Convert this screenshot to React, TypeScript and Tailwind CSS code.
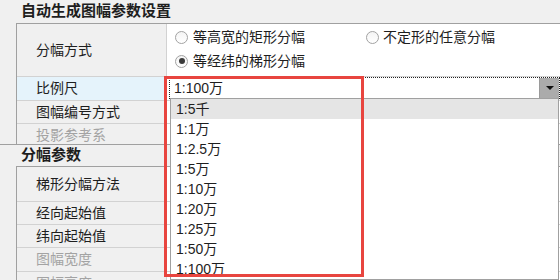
const scales = ['1:5千', '1:1万', '1:2.5万', '1:5万', '1:10万', '1:20万', '1:25万', '1:50万', '1:100万']

function Radio({ checked }: { checked?: boolean }) {
  return (
    <span className="w-[13px] h-[13px] rounded-full border border-[#a2a2a2] bg-gradient-to-b from-[#f4f4f4] to-white flex items-center justify-center shrink-0">
      {checked && <span className="w-[6px] h-[6px] rounded-full bg-[#3a3a3a]" />}
    </span>
  )
}

function Row({
  label,
  h,
  muted,
  active,
  children,
}: {
  label: string
  h: string
  muted?: boolean
  active?: boolean
  children?: React.ReactNode
}) {
  return (
    <div className={`flex border-b border-[#d2d2d2] shrink-0 ${h}`}>
      <div
        className={`w-[150px] shrink-0 pl-[19px] flex items-center border-r border-[#d2d2d2] ${
          active ? 'bg-[#e5f3fb]' : ''
        } ${muted ? 'text-[#a3a3a3]' : ''}`}
      >
        {label}
      </div>
      <div className="flex-1 bg-white">{children}</div>
    </div>
  )
}

export default function App() {
  return (
    <div className="relative w-[560px] h-[280px] overflow-hidden bg-[#f0f0f0] text-[14px] text-[#1e1e1e] font-['Liberation_Sans','Noto_Sans_CJK_SC',sans-serif] flex flex-col">
      <div className="h-[23px] shrink-0 pl-[21px] flex items-center font-bold text-[15px]">自动生成图幅参数设置</div>

      <div className="ml-[16px] h-[121px] shrink-0 border-l border-t border-[#a0a0a0] flex flex-col overflow-hidden">
        <Row label="分幅方式" h="h-[53px]">
          <div className="flex flex-col pt-[1px] pl-[8px]">
            <div className="h-[24px] flex items-center">
              <div className="w-[191px] flex items-center gap-[5px]">
                <Radio />
                <span>等高宽的矩形分幅</span>
              </div>
              <div className="flex items-center gap-[4px]">
                <Radio />
                <span>不定形的任意分幅</span>
              </div>
            </div>
            <div className="h-[24px] flex items-center gap-[5px]">
              <Radio checked />
              <span>等经纬的梯形分幅</span>
            </div>
          </div>
        </Row>
        <Row label="比例尺" h="h-[24px]" active>
          <div className="h-full pl-[2px] pb-[1px]">
            <div className="h-full flex border border-dotted border-[#222] bg-white">
              <div className="flex-1 pl-[4px] flex items-center">1:100万</div>
              <div className="w-[20px] bg-[#ababab] border-l border-[#9a9a9a] flex items-center justify-center">
                <svg width="8" height="4" viewBox="0 0 8 4">
                  <path d="M0 0h8L4 4z" fill="#111" />
                </svg>
              </div>
            </div>
          </div>
        </Row>
        <Row label="图幅编号方式" h="h-[23px]" />
        <Row label="投影参考系" h="h-[23px]" muted />
      </div>

      <div className="h-[22px] shrink-0 border-t border-[#a0a0a0] pl-[21px] flex items-center font-bold text-[15px]">分幅参数</div>

      <div className="ml-[16px] flex-1 border-l border-t border-[#a0a0a0] flex flex-col overflow-hidden">
        <Row label="梯形分幅方法" h="h-[35px]" />
        <Row label="经向起始值" h="h-[23px]" />
        <Row label="纬向起始值" h="h-[23px]" />
        <Row label="图幅宽度" h="h-[24px]" muted />
        <Row label="图幅高度" h="h-[23px]" muted />
      </div>

      <div className="absolute left-[170px] top-[98px] w-[389px] h-[182px] bg-white border border-[#a0a0a0] flex flex-col">
        {scales.map((s, i) => (
          <div key={s} className={`h-[20px] shrink-0 pl-[5px] flex items-center ${i === 0 ? 'bg-[#e5e5e5]' : ''}`}>
            {s}
          </div>
        ))}
      </div>

      <div className="absolute left-[164px] top-[76px] w-[200px] h-[201px] border-[3px] border-[#e8453f]" />
    </div>
  )
}
